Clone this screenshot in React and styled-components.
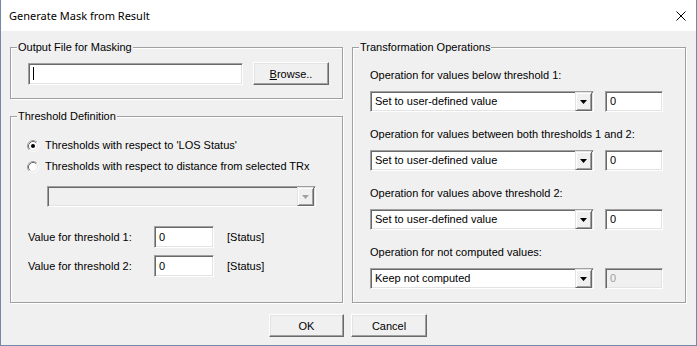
import React from "react";
import styled, { createGlobalStyle } from "styled-components";

const GlobalStyle = createGlobalStyle`
  body {
    margin: 0;
    background: #ffffff;
    font-family: "Liberation Sans", Arial, sans-serif;
    font-size: 11px;
    color: #000000;
  }
`;

const Window = styled.div`
  width: 697px;
  height: 346px;
  box-sizing: border-box;
  border: 1px solid #7289ab;
  border-top: none;
  background: #f0f0f0;
  display: flex;
  flex-direction: column;
`;

const TitleBar = styled.div`
  height: 31px;
  background: #ffffff;
  display: flex;
  align-items: center;
  justify-content: space-between;
  padding: 0 10px 0 8px;
  flex-shrink: 0;
`;

const Title = styled.div`
  font-family: "Noto Sans", "Open Sans", sans-serif;
  font-size: 11px;
  color: #000000;
`;

const CloseButton = styled.div`
  width: 10px;
  height: 10px;
  display: flex;
`;

const Body = styled.div`
  flex: 1;
  display: flex;
  flex-direction: column;
  padding: 10px 10px 0 9px;
`;

const Columns = styled.div`
  display: grid;
  grid-template-columns: 333px 334px;
  column-gap: 9px;
`;

const Column = styled.div`
  display: flex;
  flex-direction: column;
  gap: 11px;
`;

const Group = styled.fieldset`
  margin: 0;
  padding: 0;
  min-width: 0;
  border: 1px solid #a0a0a0;
  box-shadow: inset 1px 1px 0 #ffffff, 1px 1px 0 #ffffff;
  display: flex;
  flex-direction: column;
  flex: ${p => (p.$grow ? 1 : "none")};
`;

const Legend = styled.legend`
  margin-left: 6px;
  padding: 0 1px;
  line-height: 13px;
  background: #f0f0f0;
`;

const GroupContent = styled.div`
  display: flex;
  flex-direction: column;
  padding: ${p => p.$pad};
`;

const Row = styled.div`
  display: flex;
  align-items: center;
  gap: ${p => p.$gap || 0}px;
`;

const Sunken = styled.div`
  box-sizing: border-box;
  width: ${p => p.$w}px;
  height: ${p => p.$h || 22}px;
  background: ${p => (p.$disabled ? "#f0f0f0" : "#ffffff")};
  border: 1px solid;
  border-color: #a0a0a0 #ffffff #ffffff #a0a0a0;
  box-shadow: inset 1px 1px 0 #696969, inset -1px -1px 0 #e3e3e3;
  display: flex;
  align-items: center;
  padding: 0 3px 0 4px;
  color: ${p => (p.$disabled ? "#a0a0a0" : "#000000")};
  line-height: 13px;
`;

const Caret = styled.span`
  width: 1px;
  height: 13px;
  background: #000000;
`;

const ComboText = styled.span`
  flex: 1;
  white-space: nowrap;
`;

const DropButton = styled.div`
  box-sizing: border-box;
  width: 17px;
  height: 100%;
  margin-right: -2px;
  border: 1px solid;
  border-color: #e3e3e3 #696969 #696969 #e3e3e3;
  box-shadow: inset 1px 1px 0 #ffffff, inset -1px -1px 0 #a0a0a0;
  background: #f0f0f0;
  display: flex;
  align-items: center;
  justify-content: center;
`;

const Button = styled.button`
  box-sizing: border-box;
  width: ${p => p.$w || 75}px;
  height: 23px;
  padding: 0;
  margin: 0;
  font: inherit;
  color: #000000;
  background: #f0f0f0;
  border: 1px solid;
  border-color: #ffffff #696969 #696969 #ffffff;
  box-shadow: inset -1px -1px 0 #a0a0a0, inset 1px 1px 0 #e3e3e3;
`;

const Label = styled.div`
  line-height: 13px;
  white-space: nowrap;
  width: ${p => (p.$w ? `${p.$w}px` : "auto")};
`;

const RadioRow = styled.label`
  display: flex;
  align-items: center;
  gap: 6px;
  line-height: 13px;
`;

const Block = styled.div`
  display: flex;
  flex-direction: column;
  gap: 9px;
`;

const Footer = styled.div`
  display: flex;
  justify-content: center;
  gap: 7px;
  padding-top: 11px;
`;

const Arrow = ({ disabled }) => (
  <svg width="7" height="4" viewBox="0 0 7 4">
    <path d="M0 0H7L3.5 4Z" fill={disabled ? "#a0a0a0" : "#000000"} />
  </svg>
);

const Combo = ({ w, value, disabled }) => (
  <Sunken $w={w} $h={21} $disabled={disabled}>
    <ComboText>{value}</ComboText>
    <DropButton>
      <Arrow disabled={disabled} />
    </DropButton>
  </Sunken>
);

const Radio = ({ checked }) => (
  <svg width="12" height="12" viewBox="0 0 12 12">
    <circle cx="6" cy="6" r="5" fill="#ffffff" />
    <path d="M2.11 9.89A5.5 5.5 0 0 1 9.89 2.11" stroke="#a0a0a0" fill="none" />
    <path d="M9.89 2.11A5.5 5.5 0 0 1 2.11 9.89" stroke="#ffffff" fill="none" />
    <path d="M2.82 9.18A4.5 4.5 0 0 1 9.18 2.82" stroke="#696969" fill="none" />
    <path d="M9.18 2.82A4.5 4.5 0 0 1 2.82 9.18" stroke="#e3e3e3" fill="none" />
    {checked && <circle cx="6" cy="6" r="2" fill="#000000" />}
  </svg>
);

const operations = [
  { label: "Operation for values below threshold 1:", value: "Set to user-defined value" },
  { label: "Operation for values between both thresholds 1 and 2:", value: "Set to user-defined value" },
  { label: "Operation for values above threshold 2:", value: "Set to user-defined value" },
  { label: "Operation for not computed values:", value: "Keep not computed", disabled: true },
];

const App = () => (
  <>
    <GlobalStyle />
    <Window>
      <TitleBar>
        <Title>Generate Mask from Result</Title>
        <CloseButton>
          <svg width="10" height="10" viewBox="0 0 10 10">
            <path d="M0.5 0.5L9.5 9.5M9.5 0.5L0.5 9.5" stroke="#000000" strokeWidth="1" />
          </svg>
        </CloseButton>
      </TitleBar>
      <Body>
        <Columns>
          <Column>
            <Group>
              <Legend>Output File for Masking</Legend>
              <GroupContent $pad="8px 13px 13px 17px">
                <Row $gap={10}>
                  <Sunken $w={215}>
                    <Caret />
                  </Sunken>
                  <Button $w={76}><u>B</u>rowse..</Button>
                </Row>
              </GroupContent>
            </Group>
            <Group $grow>
              <Legend>Threshold Definition</Legend>
              <GroupContent $pad="16px 13px 0 16px">
                <RadioRow>
                  <Radio checked />
                  Thresholds with respect to 'LOS Status'
                </RadioRow>
                <RadioRow style={{ marginTop: 8 }}>
                  <Radio />
                  Thresholds with respect to distance from selected TRx
                </RadioRow>
                <Row style={{ marginTop: 13, paddingLeft: 20 }}>
                  <Combo w={269} value="" disabled />
                </Row>
                <Row style={{ marginTop: 19, paddingLeft: 1 }} $gap={0}>
                  <Label $w={126}>Value for threshold 1:</Label>
                  <Sunken $w={60}>0</Sunken>
                  <Label style={{ marginLeft: 13 }}>[Status]</Label>
                </Row>
                <Row style={{ marginTop: 7, paddingLeft: 1 }} $gap={0}>
                  <Label $w={126}>Value for threshold 2:</Label>
                  <Sunken $w={60}>0</Sunken>
                  <Label style={{ marginLeft: 13 }}>[Status]</Label>
                </Row>
              </GroupContent>
            </Group>
          </Column>
          <Group>
            <Legend>Transformation Operations</Legend>
            <GroupContent $pad="15px 13px 13px 17px" style={{ gap: 16 }}>
              {operations.map(op => (
                <Block key={op.label}>
                  <Label>{op.label}</Label>
                  <Row $gap={11}>
                    <Combo w={224} value={op.value} />
                    <Sunken $w={58} $h={21} $disabled={op.disabled}>0</Sunken>
                  </Row>
                </Block>
              ))}
            </GroupContent>
          </Group>
        </Columns>
        <Footer>
          <Button>OK</Button>
          <Button $w={76}>Cancel</Button>
        </Footer>
      </Body>
    </Window>
  </>
);

export default App;
